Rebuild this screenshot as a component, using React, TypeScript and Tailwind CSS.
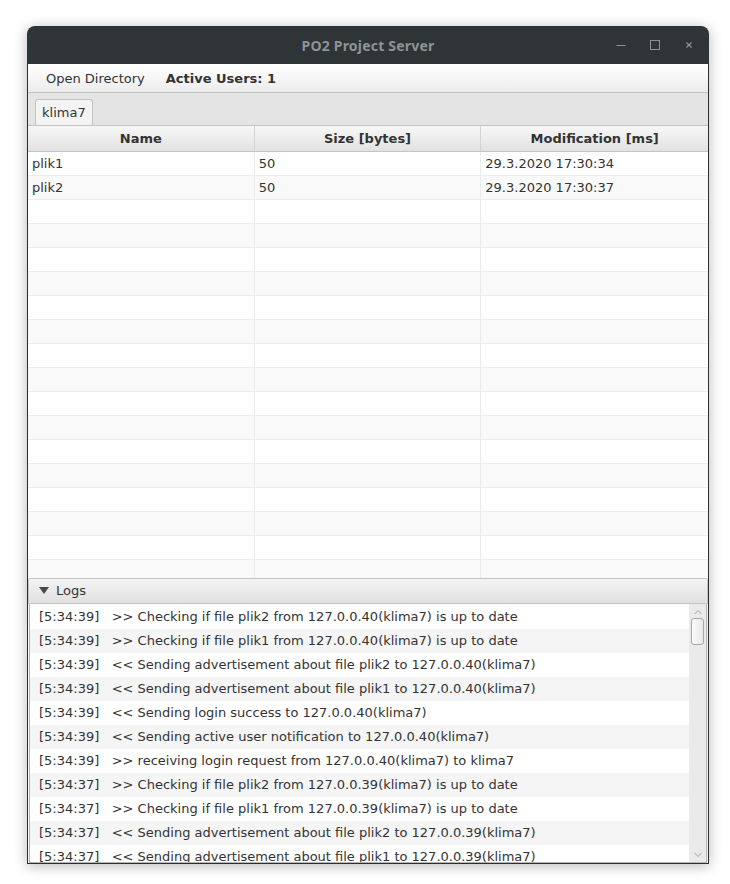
import React from "react";

const FONT = { fontFamily: '"DejaVu Sans", sans-serif' };

const FILES = [
  { name: "plik1", size: "50", mod: "29.3.2020 17:30:34" },
  { name: "plik2", size: "50", mod: "29.3.2020 17:30:37" },
];

const LOGS: [string, string][] = [
  ["5:34:39", ">> Checking if file plik2 from 127.0.0.40(klima7) is up to date"],
  ["5:34:39", ">> Checking if file plik1 from 127.0.0.40(klima7) is up to date"],
  ["5:34:39", "<< Sending advertisement about file plik2 to 127.0.0.40(klima7)"],
  ["5:34:39", "<< Sending advertisement about file plik1 to 127.0.0.40(klima7)"],
  ["5:34:39", "<< Sending login success to 127.0.0.40(klima7)"],
  ["5:34:39", "<< Sending active user notification to 127.0.0.40(klima7)"],
  ["5:34:39", ">> receiving login request from 127.0.0.40(klima7) to klima7"],
  ["5:34:37", ">> Checking if file plik2 from 127.0.0.39(klima7) is up to date"],
  ["5:34:37", ">> Checking if file plik1 from 127.0.0.39(klima7) is up to date"],
  ["5:34:37", "<< Sending advertisement about file plik2 to 127.0.0.39(klima7)"],
  ["5:34:37", "<< Sending advertisement about file plik1 to 127.0.0.39(klima7)"],
];

export default function App() {
  const rows = Array.from({ length: 18 }, (_, i) => FILES[i] ?? null);

  return (
    <div className="w-[730px] h-[884px] bg-white pl-[27px] pt-[26px]" style={FONT}>
      <div className="w-[682px] h-[838px] flex flex-col rounded-t-[8px] shadow-[0_2px_14px_rgba(0,0,0,0.28)] text-[13px] text-[#333333]">
        {/* Title bar */}
        <div className="h-[38px] shrink-0 bg-[#2f3436] rounded-t-[8px] flex items-center relative">
          <span
            className="flex-1 text-center text-[14px] font-bold text-[#8d9396] tracking-[0.2px]"
            style={{ fontFamily: '"Noto Sans", sans-serif' }}
          >
            PO2 Project Server
          </span>
          <div className="absolute right-[14px] top-0 h-full flex items-center gap-[22px] text-[#8e9294]">
            <svg width="12" height="12" viewBox="0 0 12 12">
              <path d="M1.5 6.5h9" stroke="currentColor" strokeWidth="1" />
            </svg>
            <svg width="12" height="12" viewBox="0 0 12 12">
              <rect x="1.5" y="1.5" width="9" height="9" fill="none" stroke="currentColor" strokeWidth="1" />
            </svg>
            <svg width="12" height="12" viewBox="0 0 12 12">
              <path d="M3.5 3.5l5 5M8.5 3.5l-5 5" stroke="currentColor" strokeWidth="1.2" />
            </svg>
          </div>
        </div>

        {/* Body */}
        <div className="flex-1 flex flex-col border-x border-b border-[#2b2f31] bg-[#f4f4f4] min-h-0">
          {/* Menu bar */}
          <div className="h-[29px] shrink-0 flex items-center gap-[21px] pl-[18px] pt-[2px] bg-gradient-to-b from-[#ffffff] to-[#ececec] border-b border-[#c2c2c2]">
            <span>Open Directory</span>
            <span className="font-bold">Active Users: 1</span>
          </div>

          {/* Tab header */}
          <div className="h-[32px] shrink-0 bg-[#e4e4e4] pl-[7px] pt-[6px] flex items-end">
            <div className="h-[26px] px-[6px] pt-[1px] flex items-center bg-[#f4f4f4] border border-b-0 border-[#c2c2c2] rounded-t-[3px]">
              klima7
            </div>
          </div>

          {/* Table */}
          <div className="flex-1 min-h-0 flex flex-col bg-white overflow-hidden border-t border-[#c4c4c4]">
            <div className="h-[26px] shrink-0 grid grid-cols-3 bg-gradient-to-b from-[#f7f7f7] to-[#e2e2e2] border-b border-[#c4c4c4] font-bold">
              <div className="flex items-center justify-center pt-[1px] border-r border-[#d2d2d2]">Name</div>
              <div className="flex items-center justify-center pt-[1px] border-r border-[#d2d2d2]">Size [bytes]</div>
              <div className="flex items-center justify-center pt-[1px]">Modification [ms]</div>
            </div>
            <div className="flex-1 min-h-0 overflow-hidden">
              {rows.map((r, i) => (
                <div
                  key={i}
                  className={`h-[24px] grid grid-cols-3 border-b border-[#ececec] ${
                    i % 2 === 1 ? "bg-[#f9f9f9]" : "bg-white"
                  }`}
                >
                  <div className="flex items-center pl-[4px] pt-[1px] border-r border-[#ececec]">{r?.name}</div>
                  <div className="flex items-center pl-[4px] pt-[1px] border-r border-[#ececec]">{r?.size}</div>
                  <div className="flex items-center pl-[4px] pt-[1px]">{r?.mod}</div>
                </div>
              ))}
            </div>
          </div>

          {/* Logs titled pane */}
          <div className="h-[26px] shrink-0 flex items-center gap-[7px] pl-[10px] bg-gradient-to-b from-[#f4f4f4] to-[#e0e0e0] border border-[#c4c4c4] rounded-t-[2px]">
            <svg width="10" height="8" viewBox="0 0 10 8">
              <path d="M0 0h10L5 7z" fill="#4a4a4a" />
            </svg>
            <span>Logs</span>
          </div>
          <div className="h-[259px] shrink-0 flex border border-t-0 border-[#b5b5b5] mx-[1px] bg-white overflow-hidden">
            <div className="flex-1 overflow-hidden pt-[1px]">
              {LOGS.map(([t, m], i) => (
                <div
                  key={i}
                  className={`h-[24px] flex items-center pl-[9px] whitespace-pre ${
                    i % 2 === 1 ? "bg-[#f5f5f5]" : "bg-white"
                  }`}
                >
                  {`[${t}]   ${m}`}
                </div>
              ))}
            </div>
            {/* Scrollbar */}
            <div className="w-[17px] shrink-0 bg-[#eaeaea] flex flex-col items-center">
              <svg width="10" height="8" viewBox="0 0 10 8" className="mt-[4px] text-[#a0a0a0]">
                <path d="M1.5 6L5 2.5 8.5 6" fill="none" stroke="currentColor" strokeWidth="1" />
              </svg>
              <div className="mt-[2px] w-[13px] h-[27px] rounded-[3px] border border-[#a8a8a8] bg-gradient-to-r from-[#fbfbfb] to-[#e8e8e8]" />
              <div className="flex-1" />
              <svg width="10" height="8" viewBox="0 0 10 8" className="mb-[3px] text-[#a0a0a0]">
                <path d="M1.5 2L5 5.5 8.5 2" fill="none" stroke="currentColor" strokeWidth="1" />
              </svg>
            </div>
          </div>
        </div>
      </div>
    </div>
  );
}
